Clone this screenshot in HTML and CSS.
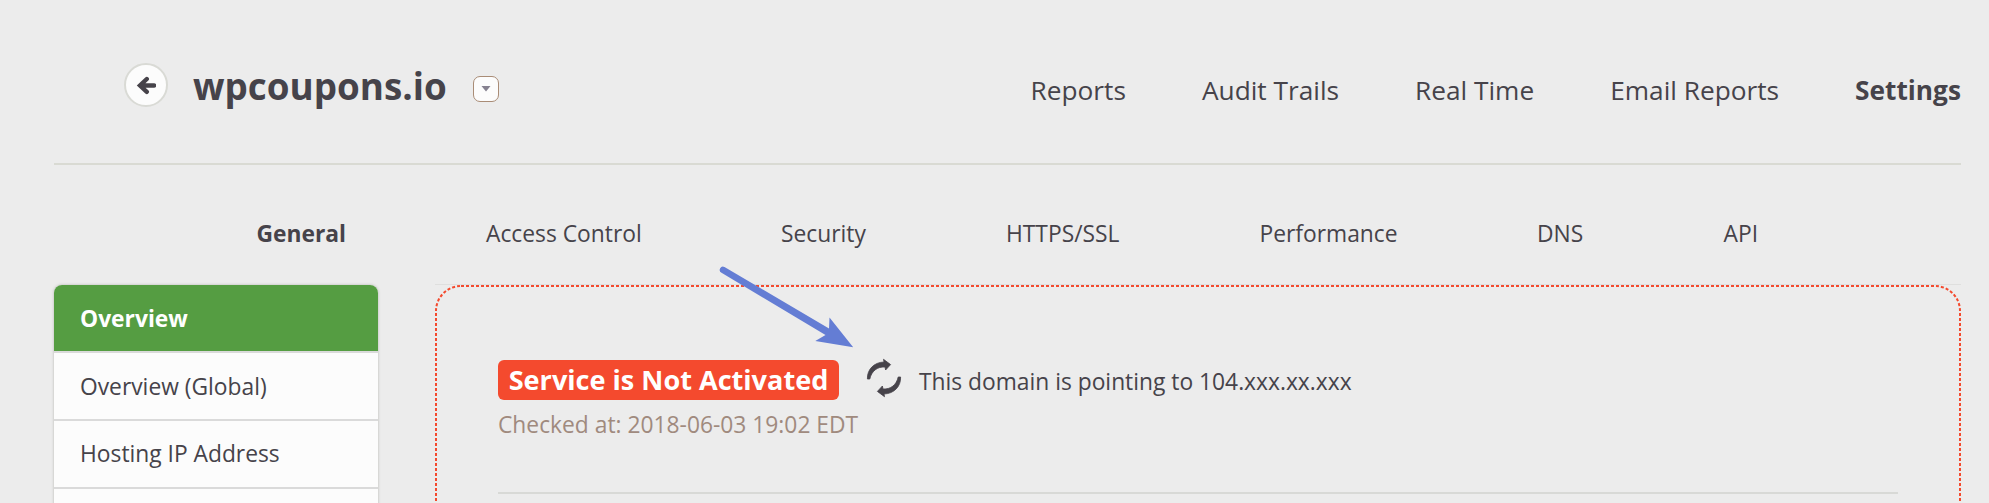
FILE: index.html
```
<!DOCTYPE html>
<html lang="en">
<head>
<meta charset="utf-8">
<title>wpcoupons.io - Settings</title>
<link rel="stylesheet" href="styles.css">
</head>
<body>
<div class="page">
  <header class="header">
    <a class="back" aria-label="Back">
      <svg width="20" height="20" viewBox="0 0 20 20"><path d="M18 10.500H5M10.800 4L4 10.500l6.800 6.300" fill="none" stroke="#46434a" stroke-width="4.400" stroke-linecap="round"/></svg>
    </a>
    <h1 class="title">wpcoupons.io</h1>
    <a class="dropdown" aria-label="Choose site">
      <svg width="10" height="6" viewBox="0 0 10 6"><path d="M.5 0h9L5 5.5z" fill="#85818f"/></svg>
    </a>
    <nav class="main-nav">
      <a>Reports</a><a>Audit Trails</a><a>Real Time</a><a>Email Reports</a><a class="active">Settings</a>
    </nav>
  </header>
  <nav class="sub-nav">
    <a class="active">General</a><a>Access Control</a><a>Security</a><a>HTTPS/SSL</a><a>Performance</a><a>DNS</a><a>API</a>
  </nav>
  <div class="content">
    <aside class="sidebar">
      <a class="current">Overview</a>
      <a class="first">Overview (Global)</a>
      <a>Hosting IP Address</a>
      <a></a>
    </aside>
    <main class="panel">
      <svg class="outline" width="1526" height="300"><rect x="1" y="1" width="1524" height="340" rx="25" fill="none" stroke="#f44a2e" stroke-width="2" stroke-dasharray="3 2"/></svg>
      <div class="status">
        <span class="badge">Service is Not Activated</span>
        <svg class="refresh" width="36" height="40" viewBox="866 358 36 40">
          <g id="half" fill="#46434a" stroke="#46434a" stroke-width=".8" stroke-linejoin="round"><path d="M867.400 379C867 369.500 874 362.300 884 362L883.500 359.300L890.600 364.600L885.600 370L885 367C877.500 366.500 871.500 371 869.800 379Z"/></g>
          <use href="#half" transform="rotate(180 884 378)"/>
        </svg>
        <span class="message">This domain is pointing to 104.xxx.xx.xxx</span>
      </div>
      <p class="checked">Checked at: 2018-06-03 19:02 EDT</p>
      <hr class="rule">
    </main>
  </div>
  <svg class="pointer" width="140" height="86" viewBox="717 264 140 86"><path d="M724.500 267L829 328.500L829.500 317.500L853.200 347.200L815.300 341L825.500 335L721.500 272.700A3.200 3.200 0 0 1 724.500 267Z" fill="#647dd4"/></svg>
</div>
</body>
</html>
```
FILE: styles.css
```
* { box-sizing: border-box; }
body {
  margin: 0;
  background: #ececec;
  color: #46434a;
  font-family: "Open Sans", sans-serif;
  font-size: 22.800px;
}
.page {
  position: relative;
  height: 503px;
  overflow: hidden;
  padding: 0 28px 0 54px;
}
.header {
  display: flex;
  align-items: flex-start;
  height: 165px;
  padding-left: 70px;
  border-bottom: 2px solid #d9dad3;
}
.back {
  display: flex;
  align-items: center;
  justify-content: center;
  width: 44px;
  height: 44px;
  margin-top: 63px;
  border: 2px solid #d9dad5;
  border-radius: 50%;
  background: #fcfcfc;
}
.title {
  margin: 61px 0 0 25px;
  width: 254px;
  font-size: 36.8px;
  line-height: 50px;
  white-space: nowrap;
}
.dropdown {
  display: flex;
  align-items: center;
  justify-content: center;
  width: 26px;
  height: 26px;
  margin: 76px 0 0 26px;
  border: 1px solid #a98c76;
  border-radius: 7px;
  background: #fcfcfc;
}
.main-nav {
  display: flex;
  gap: 76px;
  margin: 70px 0 0 auto;
  font-size: 26.250px;
  line-height: 40px;
  white-space: nowrap;
}
.active { font-weight: 700; }
.sub-nav {
  display: grid;
  grid-template-columns: 229.500px 295px 225px 253.500px 277.500px 186.500px auto;
  height: 120px;
  padding: 49px 0 0 202.500px;
  line-height: 40px;
  white-space: nowrap;
}
.content {
  display: grid;
  grid-template-columns: 324px 1526px;
  gap: 57px;
}
.sidebar {
  height: 230px;
  border-radius: 8px 8px 0 0;
  background: #fcfcfc;
  box-shadow: 0 0 3px rgba(100, 100, 90, .4);
  overflow: hidden;
}
.sidebar a {
  display: block;
  height: 68px;
  padding-left: 26px;
  border-top: 2px solid #dadada;
  line-height: 65px;
}
.sidebar .first { line-height: 67px; }
.sidebar .current {
  height: 66px;
  border-top: 0;
  background: #559d42;
  color: #fff;
  font-weight: 700;
  line-height: 67px;
}
.panel {
  position: relative;
  padding: 75px 63px 0;
  box-shadow: 0 -1px 0 #dfdfde;
}
.outline {
  position: absolute;
  top: 0;
  left: 0;
}
.status {
  display: flex;
  height: 40px;
  white-space: nowrap;
}
.badge {
  width: 341px;
  height: 40px;
  border-radius: 6px;
  background: #f44a2e;
  color: #fff;
  font-size: 27.100px;
  font-weight: 700;
  line-height: 39px;
  text-align: center;
}
.refresh {
  margin: -2px 0 0 27px;
}
.message {
  margin-left: 17px;
  line-height: 43px;
}
.checked {
  margin: 5px 0 0;
  color: #a08a7e;
  line-height: 40px;
}
.rule {
  margin: 47px 0 0;
  width: 1400px;
  border: 0;
  border-top: 2px solid #d8d9d6;
}
.pointer {
  position: absolute;
  left: 717px;
  top: 264px;
}
```
